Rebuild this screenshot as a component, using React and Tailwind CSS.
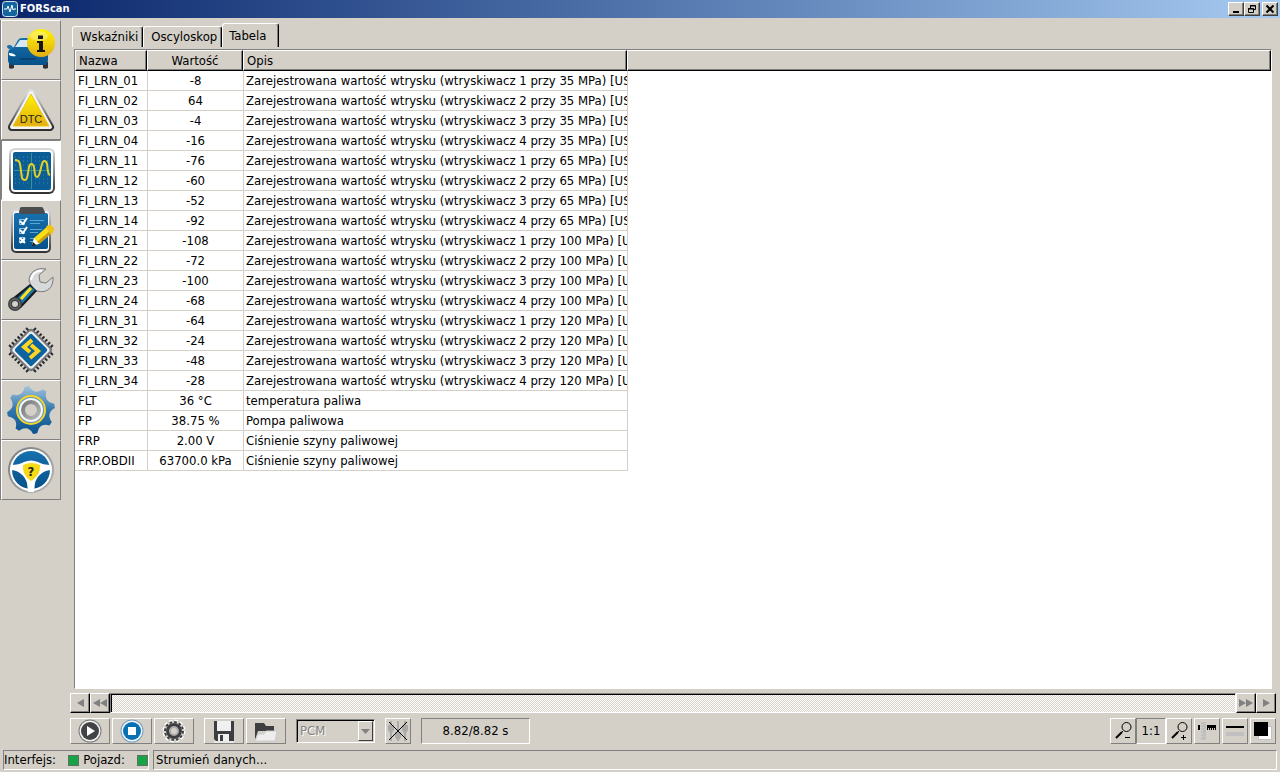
import { useState } from 'react';

const rows = [
  ...[
    ['01', '-8'], ['02', '64'], ['03', '-4'], ['04', '-16'],
    ['11', '-76'], ['12', '-60'], ['13', '-52'], ['14', '-92'],
    ['21', '-108'], ['22', '-72'], ['23', '-100'], ['24', '-68'],
    ['31', '-64'], ['32', '-24'], ['33', '-48'], ['34', '-28'],
  ].map(([id, value]) => {
    const pressure = [35, 65, 100, 120][Number(id[0])];
    return {
      name: `FI_LRN_${id}`,
      value,
      desc: `Zarejestrowana wartość wtrysku (wtryskiwacz ${id[1]} przy ${pressure} MPa) [US]`,
    };
  }),
  { name: 'FLT', value: '36 °C', desc: 'temperatura paliwa' },
  { name: 'FP', value: '38.75 %', desc: 'Pompa paliwowa' },
  { name: 'FRP', value: '2.00 V', desc: 'Ciśnienie szyny paliwowej' },
  { name: 'FRP.OBDII', value: '63700.0 kPa', desc: 'Ciśnienie szyny paliwowej' },
];

/* ---------- sidebar icons, 48x48 ---------- */

const Svg = ({ children }) => (
  <svg width="48" height="48" viewBox="0 0 48 48" aria-hidden="true">
    <defs>
      <linearGradient id="blue" x1="0" y1="0" x2="0" y2="1">
        <stop offset="0" stopColor="#1670ad" />
        <stop offset="1" stopColor="#075189" />
      </linearGradient>
      <linearGradient id="yellow" x1="0" y1="0" x2="0" y2="1">
        <stop offset="0" stopColor="#fff200" />
        <stop offset="1" stopColor="#e3ae14" />
      </linearGradient>
      <linearGradient id="steel" x1="0" y1="0" x2="0" y2="1">
        <stop offset="0" stopColor="#d9dadb" />
        <stop offset="0.5" stopColor="#8b8d8f" />
        <stop offset="1" stopColor="#2e3031" />
      </linearGradient>
      <linearGradient id="ring" x1="0" y1="0" x2="1" y2="1">
        <stop offset="0" stopColor="#77797b" />
        <stop offset="1" stopColor="#b5b7b9" />
      </linearGradient>
    </defs>
    {children}
  </svg>
);

const CarIcon = () => (
  <Svg>
    <path d="M2 36h5v6q-3 1.500-5 0zM36 36h5v6q-3 1.500-5 0z" fill="#303235" />
    <path d="M7 21 11 14q1-2 4-2h13q2 0 3 2l5 8q5 2 5 7v4q0 6-4 6H6q-5 0-5-5v-6q0-5 4-6z" fill="url(#blue)" />
    <path d="M8 21l5-7h15l4 7z" fill="#d7e9f5" />
    <path d="M0 20q2-2 5 0l1 2-3 1q-3 0-3-3z" fill="#1670ad" />
    <path d="M2 27q5 0 7 3-4 1-7-1zM40 27q-4 0-6 3 4 1 6-1z" fill="#fff" />
    <path d="M12 32h18l-2 2H14z" fill="#0a4373" />
    <circle cx="34" cy="17" r="14" fill="url(#yellow)" />
    <ellipse cx="32" cy="10" rx="9" ry="5" fill="#fff" opacity="0.3" />
    <path d="M31 9.500h5v3.500h-5zM30 15h6v9h2v2h-8v-2h2v-7h-2z" fill="#151515" />
  </Svg>
);

const DtcIcon = () => (
  <Svg>
    <path d="M24 7 43 41H5z" fill="none" stroke="url(#steel)" strokeWidth="8" strokeLinejoin="round" />
    <path d="M24 7 43 41H5z" fill="#f4f4f4" stroke="#f4f4f4" strokeWidth="4" strokeLinejoin="round" />
    <path d="M24 8 42 40H6z" fill="url(#yellow)" stroke="#efc50f" strokeWidth="1" strokeLinejoin="round" />
    <text x="24" y="37" textAnchor="middle" fontSize="11" className="font-['Liberation_Sans_Narrow','Liberation_Sans',sans-serif]" fill="#25241c">DTC</text>
  </Svg>
);

const ScopeIcon = () => (
  <Svg>
    <rect x="2" y="2" width="46" height="46" rx="6" fill="url(#steel)" />
    <rect x="4" y="4" width="42" height="42" rx="4" fill="#fff" />
    <rect x="6" y="6" width="38" height="38" rx="2" fill="#0c5c96" />
    <path d="M8 11h34M8 15h34M8 19h34M8 29h34M8 33h34M8 37h34" stroke="#2e8aae" strokeDasharray="1 3" />
    <path d="M7 24.500h36M24.500 7v36" stroke="#3c928c" />
    <path d="M8 14c5 0 5 3 6 11s1 9 4 9 3-9 4-13 4-4 5 0 0 10 3 10 3-7 5-13c1-4 4-4 5 0s0 10 3 11" fill="none" stroke="#e5d223" strokeWidth="2" />
  </Svg>
);

const ChecklistIcon = () => (
  <Svg>
    <rect x="4" y="3" width="40" height="44" rx="5" fill="url(#steel)" />
    <rect x="6" y="5" width="36" height="40" rx="3" fill="#f2f2f2" />
    <rect x="7" y="7" width="34" height="36" rx="2" fill="url(#blue)" />
    <path d="M13 2q0-1 2-1h19q2 0 2 1l2 4q0 2-3 2H15q-3 0-3-2z" fill="#4a4c4e" />
    <path d="M23 14.500h14M23 17.500h10M23 23.500h12M23 26.500h8M23 32.500h7M23 35.500h5" stroke="#5aa6d4" />
    <path d="M12.500 13.500h5v5h-5zM12.500 22.500h5v5h-5zM12.500 31.500h5v5h-5z" fill="none" stroke="#9bc9e5" />
    <path d="M13 15l3 3 4-6M13 24l3 3 4-6M13 32l5 5m0-5l-5 5" fill="none" stroke="#fff" strokeWidth="2" />
    <path d="M26 39l1-7 14-12 5 6-14 12z" fill="#f9df16" />
    <path d="M30 36l14-12 2 2-14 12z" fill="#cc9b16" />
    <path d="M39 21l2-2q2-1 4 1l2 2q1 2-1 4l-3 2z" fill="#f0c41a" />
    <path d="M25 39l2-7 5 6z" fill="#fff" />
    <path d="M25 40l1-4 3 3z" fill="#151515" />
  </Svg>
);

const WrenchIcon = () => (
  <Svg>
    <path d="M22 15c0-9 8-14 17-12l-7 6 1 7 6 1 7-6c1 10-6 17-16 14l-4-2z" fill="#d8d9da" stroke="#77797b" />
    <path d="M24 14c1-7 7-10 11-9" fill="none" stroke="#fff" strokeWidth="2" />
    <path d="M23 18l7 7L14 42 3 34z" fill="#17191b" />
    <path d="M23 20l5 4-15 16-6-5z" fill="#1873ae" />
    <path d="M24 22 14 33" stroke="#ffe21b" strokeWidth="3" />
    <circle cx="8" cy="38" r="7" fill="#3c3e40" />
    <circle cx="8" cy="38" r="5" fill="none" stroke="#77797b" strokeWidth="1" />
    <circle cx="8" cy="38" r="3" fill="#d4d0c8" />
  </Svg>
);

const ChipIcon = () => (
  <Svg>
    <g transform="rotate(45 24 24)">
      <path d="M12 5v38M16 5v38M20 5v38M24 5v38M28 5v38M32 5v38M36 5v38M5 12h38M5 16h38M5 20h38M5 24h38M5 28h38M5 32h38M5 36h38" stroke="#2b2d2f" strokeWidth="2" />
      <rect x="8" y="8" width="32" height="32" rx="4" fill="#77797b" />
      <rect x="10" y="10" width="28" height="28" rx="3" fill="#eeeeee" />
      <rect x="12" y="12" width="24" height="24" rx="2" fill="#0d62a0" />
    </g>
    <path d="M25 14 17 21l6 5M24 19l7 6-8 7" fill="none" stroke="#ffd51f" strokeWidth="4" />
  </Svg>
);

// eight pointed teeth joined by concave arcs
const point = (radius, deg) => {
  const a = (deg * Math.PI) / 180;
  return `${(24 + radius * Math.cos(a)).toFixed(1)} ${(24 + radius * Math.sin(a)).toFixed(1)}`;
};
const gearPath = `${[0, 1, 2, 3, 4, 5, 6, 7]
  .map((k) => {
    const deg = k * 45 - 10;
    return `${k ? 'L' : 'M'}${point(24, deg - 5)}L${point(24, deg + 5)}Q${point(15, deg + 22)} ${point(24, deg + 40)}`;
  })
  .join('')}Z`;

const GearIcon = () => (
  <Svg>
    <defs>
      <linearGradient id="gearBlue" x1="0" y1="0" x2="0" y2="1">
        <stop offset="0" stopColor="#a3c3dc" />
        <stop offset="0.5" stopColor="#3277ad" />
        <stop offset="1" stopColor="#0a528f" />
      </linearGradient>
    </defs>
    <path d={gearPath} fill="url(#gearBlue)" />
    <circle cx="24" cy="24" r="14" fill="#5c98c4" stroke="#f4d52a" strokeWidth="2" />
    <circle cx="24" cy="24" r="12" fill="#f7f7f7" />
    <circle cx="24" cy="24" r="8" fill="#d4d0c8" stroke="url(#ring)" strokeWidth="4" />
  </Svg>
);

const WheelIcon = () => (
  <Svg>
    <circle cx="24" cy="24" r="23" fill="url(#ring)" />
    <circle cx="24" cy="24" r="21" fill="#fff" />
    <circle cx="24" cy="24" r="19" fill="url(#blue)" />
    <path d="M4 19q8 0 13-3 7-3 14 0 5 3 13 3l1 5c-9 0-15 6-17 13l-1 9h-6l-1-9C18 30 12 24 3 24z" fill="#fff" />
    <path d="M16 19q8-4 17 0 1 10-9 16-9-6-8-16z" fill="#f6da16" />
    <text x="24" y="30" textAnchor="middle" fontSize="13" fontWeight="bold" fill="#222">?</text>
  </Svg>
);

const sections = [
  ['Pojazd', CarIcon],
  ['DTC', DtcIcon],
  ['Oscyloskop', ScopeIcon],
  ['Testy', ChecklistIcon],
  ['Serwis', WrenchIcon],
  ['Konfiguracja', ChipIcon],
  ['Ustawienia', GearIcon],
  ['Pomoc', WheelIcon],
];

/* ---------- toolbar icons, 24x24 ---------- */

const Small = ({ children }) => (
  <svg width="24" height="24" viewBox="0 0 24 24" aria-hidden="true">{children}</svg>
);

const PlayIcon = () => (
  <Small>
    <circle cx="12" cy="12" r="11.500" fill="#77797b" />
    <circle cx="12" cy="12" r="10.500" fill="#f5f5f5" />
    <circle cx="12" cy="12" r="9" fill="#414345" />
    <path d="M9 7v10l8-5z" fill="#fff" />
  </Small>
);

const StopIcon = () => (
  <Small>
    <circle cx="12" cy="12" r="11.500" fill="#77a0bd" />
    <circle cx="12" cy="12" r="10.500" fill="#f5f5f5" />
    <circle cx="12" cy="12" r="9" fill="#0870b4" />
    <path d="M8 8h8v8H8z" fill="#fff" />
  </Small>
);

const CogIcon = () => (
  <Small>
    <circle cx="12" cy="12" r="9.500" fill="none" stroke="#fff" strokeWidth="4" strokeDasharray="3 2" />
    <circle cx="12" cy="12" r="9" fill="none" stroke="#3c3e40" strokeWidth="2" strokeDasharray="2.700 2" />
    <circle cx="12" cy="12" r="8" fill="#3c3e40" />
    <circle cx="12" cy="12" r="4" fill="#d4d0c8" stroke="#aaa" strokeWidth="2" />
  </Small>
);

const SaveIcon = () => (
  <Small>
    <path d="M2 2h20v20H4l-2-2z" fill="#3c3e40" />
    <path d="M5 2h14v10H5z" fill="#f0f0f0" />
    <path d="M6 15h11v7H6z" fill="#f0f0f0" />
    <path d="M8 16h3v6H8z" fill="#3c3e40" />
    <path d="M2 23h20" stroke="#fff" />
  </Small>
);

const FolderIcon = () => (
  <Small>
    <path d="M1 4h9l2 3h8v5H4l-3 9z" fill="#3c3e40" />
    <path d="M1 22 4 15h6l2-3h11l-2 10z" fill="#eeeeee" stroke="#ccc" />
  </Small>
);

const LensIcon = ({ plus }) => (
  <Small>
    <circle cx="15.500" cy="8" r="4.500" fill="none" stroke="#000" />
    <path d="M12 12 10 14" stroke="#000" />
    <path d="M11 13 5 19" stroke="#000" strokeWidth="2" />
    <path d={plus ? 'M14 18.500h5M16.500 16v5' : 'M14 18.500h5'} stroke="#000" />
  </Small>
);

const RulerIcon = () => (
  <Small>
    <path d="M6 3h5v18H6z" fill="#c0c0c0" />
    <path d="M6 5.500h2M6 8.500h2M6 11.500h2M6 14.500h2M6 17.500h2" stroke="#d4d0c8" />
    <path d="M3 6h2v5H3zM12 6h9v3h-9z" fill="#000" />
    <path d="M12.500 8v3M14.500 8v3M16.500 8v3M18.500 8v3M20.500 8v3" stroke="#000" />
  </Small>
);

const LinesIcon = () => (
  <Small>
    <path d="M3 7h18v2H3z" fill="#000" />
    <path d="M3 13h18v4H3z" fill="#c0c0c0" />
  </Small>
);

const ColorsIcon = () => (
  <Small>
    <path d="M7.500 7.500h13v13h-13z" fill="#fff" stroke="#c0c0c0" />
    <path d="M3 3h14v14H3z" fill="#000" />
  </Small>
);

const SlidersOffIcon = () => (
  <Small>
    <path d="M5 2v20M12 2v20M19 2v20" stroke="#aaa" strokeWidth="2" />
    <path d="M2 6h6v5l-2 3H4l-2-3zM9 13h6v5l-2 3h-2l-2-3zM16 6h6v5l-2 3h-2l-2-3z" fill="#aaa" />
    <path d="M3 3l18 18M21 3 3 21" stroke="#000" />
  </Small>
);

const ToolButton = ({ label, wide, children }) => (
  <button
    aria-label={label}
    className={`flex h-[26px] items-center justify-center border border-t-white border-l-white border-r-[#808080] border-b-[#808080] ${wide ? 'w-10' : 'w-[26px]'}`}
  >
    {children}
  </button>
);

const ScrollButton = ({ label, points }) => (
  <button
    aria-label={label}
    className="flex w-5 items-center justify-center border border-t-white border-l-white border-r-black border-b-black shadow-[inset_-1px_-1px_0_#808080]"
  >
    <svg width="16" height="8" viewBox="0 0 16 8"><path d={points} fill="#808080" /></svg>
  </button>
);

const WindowButton = ({ label, children }) => (
  <button
    aria-label={label}
    className="flex h-[14px] w-4 items-center justify-center border border-t-white border-l-white border-r-[#404040] border-b-[#404040] bg-[#d4d0c8] shadow-[inset_-1px_-1px_0_#808080]"
  >
    <svg width="10" height="10" viewBox="0 0 10 10" fill="none" stroke="#000" className="shrink-0">{children}</svg>
  </button>
);

const headCell =
  'h-[21px] border border-t-white border-l-white border-r-black border-b-black px-[3px] font-normal shadow-[inset_-1px_-1px_0_#808080]';

export default function App() {
  const [section, setSection] = useState('Oscyloskop');
  const [tab, setTab] = useState('Tabela');

  return (
    <div className="flex h-screen flex-col bg-[#d4d0c8] font-['DejaVu_Sans_Condensed','DejaVu_Sans',sans-serif] text-[13px] leading-4 text-black">
      <header className="flex h-[18px] shrink-0 items-center bg-linear-to-r from-[#0a246a] to-[#a6caf0] pr-[2px] pl-[2px] text-white">
        <svg width="16" height="16" viewBox="0 0 16 16" className="mr-[2px]">
          <rect x="0.500" y="0.500" width="15" height="15" rx="3" fill="#13659f" stroke="#d7e3ee" />
          <path d="M2 8h3l1-3 2 6 2-7 1 5 1-1h2" fill="none" stroke="#fff" />
        </svg>
        <h1 className="text-[11px] font-bold">FORScan</h1>
        <div className="ml-auto flex">
          <WindowButton label="Minimalizuj"><path d="M2 8h6" strokeWidth="2" /></WindowButton>
          <WindowButton label="Przywróć">
            <path d="M3.500 4V1.500h5v4H7M3 2h6" />
            <path d="M1.500 4.500h5v4h-5zM1 5h6" />
          </WindowButton>
          <span className="w-[2px]" />
          <WindowButton label="Zamknij"><path d="M1.500 1.500l7 7M8.500 1.500l-7 7" strokeWidth="2" /></WindowButton>
        </div>
      </header>

      <div className="flex min-h-0 flex-1">
        <nav className="mt-[2px] w-[61px] shrink-0 self-start border-l border-[#808080]">
          {sections.map(([name, Icon]) => (
            <button
              key={name}
              aria-label={name}
              onClick={() => setSection(name)}
              className={`flex h-[60px] w-full items-center justify-center border ${
                section === name
                  ? 'border-t-[#808080] border-l-[#808080] border-r-white border-b-white bg-white'
                  : 'border-t-white border-l-white border-r-[#808080] border-b-[#808080]'
              }`}
            >
              <Icon />
            </button>
          ))}
        </nav>

        <main className="ml-[9px] flex min-w-0 flex-1 flex-col pr-1">
          <div role="tablist" className="ml-[2px] flex h-[31px] items-end pb-[2px]">
            {['Wskaźniki', 'Oscyloskop', 'Tabela'].map((name) => (
              <button
                key={name}
                role="tab"
                aria-selected={tab === name}
                onClick={() => setTab(name)}
                className={`rounded-t-[3px] border-t border-r border-l border-t-white border-r-black border-l-white shadow-[inset_-1px_0_0_#808080] ${
                  tab === name ? 'h-6 pr-3 pl-[6px]' : 'h-[21px] pr-1 pl-[7px]'
                }`}
              >
                {name}
              </button>
            ))}
          </div>

          <div className="mr-1 ml-1 min-h-0 flex-1 overflow-hidden border border-t-[#808080] border-l-[#808080] border-r-white border-b-white bg-white">
            <table className="w-full table-fixed border-separate border-spacing-0">
              <colgroup>
                <col className="w-[72px]" />
                <col className="w-24" />
                <col className="w-96" />
                <col />
              </colgroup>
              <thead className="bg-[#d4d0c8]">
                <tr>
                  <th className={`${headCell} text-left`}>Nazwa</th>
                  <th className={`${headCell} text-center`}>Wartość</th>
                  <th className={`${headCell} text-left`}>Opis</th>
                  <th className={headCell} aria-hidden="true" />
                </tr>
              </thead>
              <tbody>
                {rows.map((row) => (
                  <tr key={row.name} className="h-5">
                    <td className="border-b border-[#d4d0c8] pl-[3px] whitespace-nowrap">{row.name}</td>
                    <td className="border-b border-l border-[#d4d0c8] text-center whitespace-nowrap">{row.value}</td>
                    <td className="overflow-hidden border-b border-l border-[#d4d0c8] pl-[2px] whitespace-nowrap">{row.desc}</td>
                    <td className="border-l border-[#d4d0c8]" />
                  </tr>
                ))}
              </tbody>
            </table>
          </div>

          <div className="mt-1 flex h-5 shrink-0">
            <ScrollButton label="Wstecz" points="M12 0v8L5 4z" />
            <ScrollButton label="Na początek" points="M8 0v8L1 4zM15 0v8L8 4z" />
            <div className="flex-1 border border-t-[#808080] border-r-white border-b-white border-l-[#808080] bg-[conic-gradient(#fff_25%,#d4d0c8_0_50%,#fff_0_75%,#d4d0c8_0)] bg-[length:2px_2px] shadow-[inset_1px_1px_0_#000]" />
            <ScrollButton label="Na koniec" points="M1 0v8l7-4zM8 0v8l7-4z" />
            <ScrollButton label="Dalej" points="M5 0v8l7-4z" />
          </div>

          <div className="mt-1 flex h-[28px] shrink-0 items-center gap-[2px]">
            <ToolButton wide label="Start"><PlayIcon /></ToolButton>
            <ToolButton wide label="Stop"><StopIcon /></ToolButton>
            <ToolButton wide label="Opcje"><CogIcon /></ToolButton>
            <span className="w-[6px]" />
            <ToolButton wide label="Zapisz"><SaveIcon /></ToolButton>
            <ToolButton wide label="Otwórz"><FolderIcon /></ToolButton>
            <div className="relative mr-2 ml-2 h-6 w-[79px] border border-t-[#808080] border-l-[#808080] border-r-white border-b-white shadow-[inset_1px_1px_0_#000]">
              <select disabled aria-label="Moduł" className="block h-full w-full appearance-none pl-[3px] text-[#808080] opacity-100 [text-shadow:1px_1px_0_#fff]">
                <option>PCM</option>
              </select>
              <span className="pointer-events-none absolute top-px right-px bottom-px flex w-[15px] items-center justify-center border border-t-white border-l-white border-r-[#404040] border-b-[#404040]">
                <svg width="9" height="5" viewBox="0 0 9 5"><path d="M0 0h9L4.500 5z" fill="#808080" /></svg>
              </span>
            </div>
            <ToolButton label="Wyłącz filtry"><SlidersOffIcon /></ToolButton>
            <output className="ml-2 flex h-[26px] w-[109px] items-center justify-center border border-t-[#808080] border-l-[#808080] border-r-white border-b-white">
              8.82/8.82 s
            </output>
            <div className="ml-auto flex">
              <ToolButton label="Pomniejsz"><LensIcon /></ToolButton>
              <button className="h-[26px] w-[30px] border border-t-[#808080] border-l-[#808080] border-r-white border-b-white">1:1</button>
              <ToolButton label="Powiększ"><LensIcon plus /></ToolButton>
            </div>
            <ToolButton label="Skala"><RulerIcon /></ToolButton>
            <ToolButton label="Linie"><LinesIcon /></ToolButton>
            <ToolButton label="Kolory"><ColorsIcon /></ToolButton>
          </div>
          <div className="h-[5px] shrink-0" />
        </main>
      </div>

      <footer className="flex h-[22px] shrink-0 gap-1 pr-[3px] pb-[2px] pl-[3px]">
        <div className="flex w-[146px] items-center border border-t-[#808080] border-l-[#808080] border-r-white border-b-white">
          <span>Interfejs:</span>
          <span className="ml-auto h-[11px] w-[11px] border border-[#607060] bg-[#18a347]" />
          <span className="ml-1">Pojazd:</span>
          <span className="ml-auto h-[11px] w-[11px] border border-[#607060] bg-[#18a347]" />
        </div>
        <div className="flex flex-1 items-center border border-t-[#808080] border-l-[#808080] border-r-white border-b-white pl-[2px]">
          Strumień danych...
        </div>
      </footer>
    </div>
  );
}
